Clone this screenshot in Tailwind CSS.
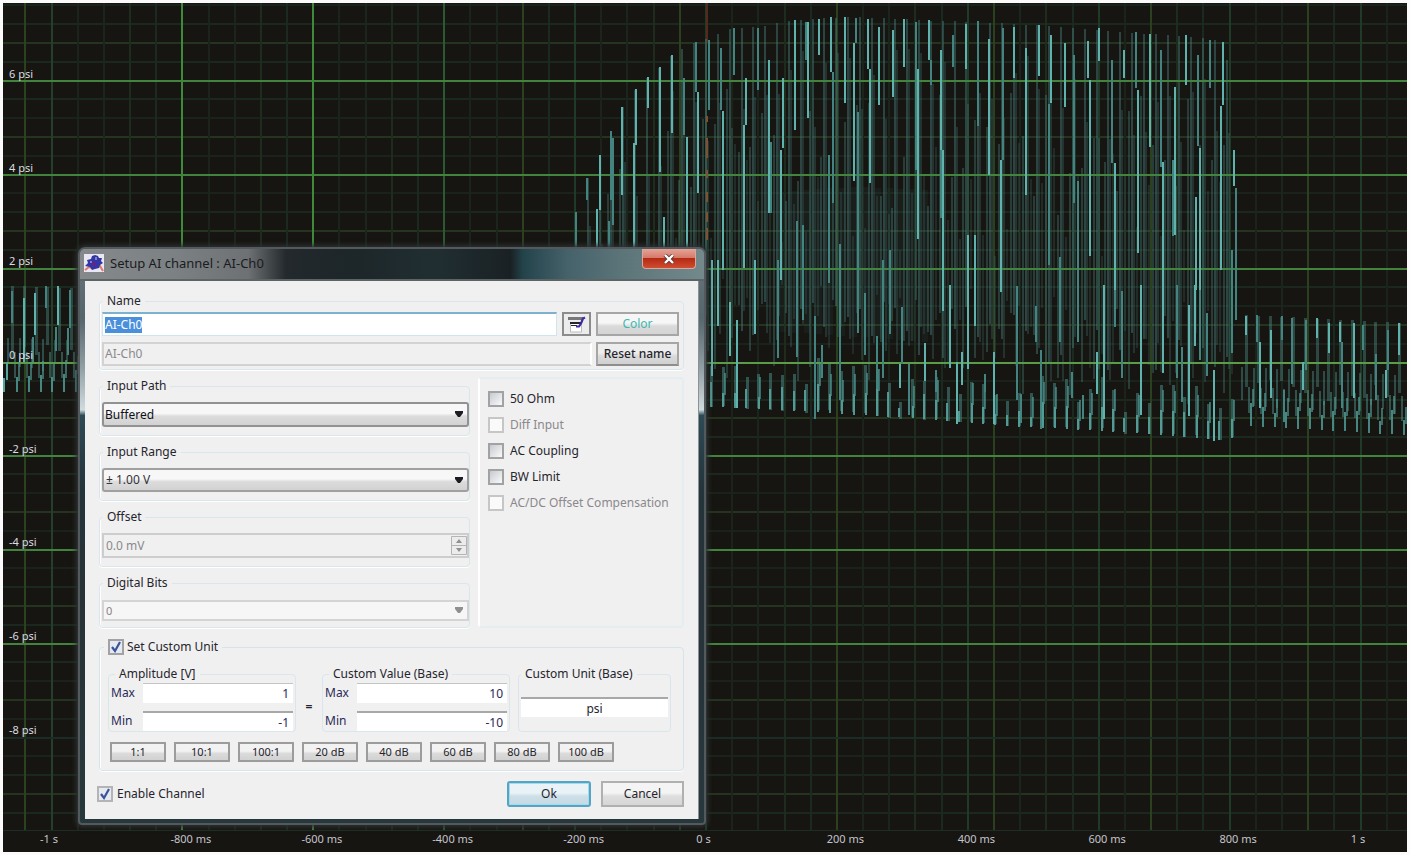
<!DOCTYPE html>
<html lang="en">
<head>
<meta charset="utf-8">
<title>Setup AI channel : AI-Ch0</title>
<script src="https://cdn.jsdelivr.net/npm/@tailwindcss/browser@4"></script>
</head>
<body class="h-screen overflow-hidden bg-[#fbfbfb] p-[3px] font-['Noto_Sans','Open_Sans',sans-serif] text-xs text-[#26242c]">
<main class="relative flex h-full flex-col bg-[#171511]">

  <!-- Oscilloscope plot -->
  <section class="relative min-h-0 flex-1 border-b border-[#1d2e25]" aria-label="Signal plot">
    <svg class="block h-full w-full" viewBox="3 3 1404 828" preserveAspectRatio="none" shape-rendering="crispEdges" fill="none" aria-hidden="true">
      <g id="grid"></g>
      <g id="dim"></g>
      <g id="major"></g>
      <g id="wave"></g>
    </svg>
    <div id="ylabels" class="text-[11px] leading-4 text-[#dcdce2]"></div>
  </section>
  <div id="xlabels" class="relative h-[21px] text-[11px] leading-4 text-[#c4c4cc]"></div>

  <!-- Dialog window -->
  <section role="dialog" aria-label="Setup AI channel : AI-Ch0" class="absolute left-[75px] top-[244px] flex w-[628px] flex-col rounded-t-[7px] rounded-b border-2 border-[#55595b] bg-[linear-gradient(180deg,#68777c_0%,#55666c_12%,#8b9a9f_20%,#cfdcdf_28%,#2d4a55_29%,#24343b_42%,#263238_60%,#27383d_100%)] px-[5px] pb-1 shadow-[0_0_5px_2px_#2c3336]">
    <header class="-mx-[5px] flex h-[32px] items-start justify-between rounded-t-[5px] border-b-2 border-[#5d6466] bg-[linear-gradient(90deg,#85898b_0%,#7c8183_15%,#6d7173_27%,#23292c_33%,#1d2629_43%,#202e32_57%,#1a2124_69%,#23434b_71%,#45616a_78%,#5c7579_87%,#73898c_100%)] pl-1 pr-2">
      <h1 class="flex items-center gap-1.5 pt-1 text-[13px] leading-5 text-[#1b1b22]">
        <svg class="h-[18px] w-5" viewBox="0 0 20 18" aria-hidden="true">
          <path fill="#e9e8f2" d="M0 0h20v18H0z"/>
          <path fill="none" stroke="#e4766a" stroke-width="2" d="M1 16l4-3 3 1M13 13l3-1 3 5"/>
          <path fill="#3436a4" d="M11 1l3 1 1 2h3l-1 3 2 2-3 2-1 3-4 1-3 1-2-3-5-1 3-3-1-3 4-1 1-3z"/>
          <path fill="#5a2a86" d="M8 8h4v4H8z"/>
          <path fill="#7c7fd6" d="M11 3h2v3h-2zM6 7h2v2H6z"/>
        </svg>
        Setup AI channel : AI-Ch0
      </h1>
      <button type="button" aria-label="Close" class="flex h-5 w-[54px] items-center justify-center rounded-b border border-t-0 border-[#d9a79c] bg-[linear-gradient(180deg,#e5a497_0%,#d67b6b_45%,#b52a13_50%,#cf4d30_100%)]">
        <svg class="h-2.5 w-3" viewBox="0 0 12 10" aria-hidden="true"><path d="M2 1l8 8M10 1L2 9" stroke="#5c3a38" stroke-width="4"/><path d="M2 1l8 8M10 1L2 9" stroke="#fff" stroke-width="2.4"/></svg>
      </button>
    </header>

    <form class="flex flex-col border-r border-[#8b9293] bg-[#f0f0f0] px-[14px] pb-3 pt-[11px]" onsubmit="return false">
      <fieldset class="rounded border border-[#d9e7ec] pb-[3px] pl-0.5 pr-1 pt-0.5 shadow-[inset_1px_0_0_#fff,0_1px_0_#fff]">
        <legend class="ml-px px-1 leading-[18px]">Name</legend>
        <div class="flex h-6 items-stretch gap-[5px]">
          <input id="name" aria-label="Name" value="AI-Ch0" class="min-w-0 flex-1 border border-[#cfe6f0] border-t-2 border-t-[#7db1d0] bg-white px-0.5 outline-none selection:bg-[#4a8fdc] selection:text-white">
          <button type="button" aria-label="Edit name" class="flex w-[29px] items-center justify-center border-2 border-[#8c8c8c] bg-[#ececec]">
            <svg class="h-[17px] w-[19px]" viewBox="0 0 19 17" aria-hidden="true"><path fill="#fff" stroke="#bbb" d="M3.500 6v10h11V6"/><path fill="#777" d="M1 1h15v3H1z"/><path fill="#26242c" d="M3 6h11v2H3zM4 9h6v1H4z"/><path d="M9 10.500h3l2-3 2-5 2-1" stroke="#3b2ca0" stroke-width="2.200" fill="none"/></svg>
          </button>
          <button type="button" class="w-[83px] border-2 border-[#a6a6a6] bg-[linear-gradient(180deg,#f6f6f6_45%,#dadada_60%,#d4d4d4)] text-[#3fb8b0]">Color</button>
        </div>
        <div class="mt-[6px] flex h-6 items-stretch gap-1">
          <input aria-label="Original name" value="AI-Ch0" disabled class="min-w-0 flex-1 border-2 border-[#d2d2d2] border-r-white bg-[#f0f0f0] px-px text-[#8b888c]">
          <button type="button" class="w-[83px] whitespace-nowrap border-2 border-[#a6a6a6] border-b-[#8e8e8e] bg-[linear-gradient(180deg,#ededed_45%,#dadada_60%,#d0d0d0)] font-medium">Reset name</button>
        </div>
      </fieldset>

      <div class="mt-[7px] flex items-start gap-2">
        <div class="flex min-w-0 flex-1 flex-col gap-[7px]">
          <fieldset class="rounded border border-[#d9e7ec] px-0.5 pb-2 pt-[7px] shadow-[inset_1px_0_0_#fff,0_1px_0_#fff]">
            <legend class="ml-px px-1 leading-[18px]">Input Path</legend>
            <div class="relative -mr-0.5">
              <select aria-label="Input Path" class="h-[25px] w-full appearance-none rounded-[3px] border-2 border-[#929292] bg-[linear-gradient(180deg,#f7f7f7_45%,#dcdcdc_58%,#d2d2d2)] px-px text-[#101018]"><option>Buffered</option></select>
              <svg class="pointer-events-none absolute right-1.5 top-[9px] h-[7px] w-2" viewBox="0 0 8 7" aria-hidden="true"><path fill="#1c1c22" d="M0 0h8v2L5 6H3L0 2z"/></svg>
            </div>
          </fieldset>
          <fieldset class="rounded border border-[#d9e7ec] px-0.5 pb-2 pt-[7px] shadow-[inset_1px_0_0_#fff,0_1px_0_#fff]">
            <legend class="ml-px px-1 leading-[18px]">Input Range</legend>
            <div class="relative -mr-0.5">
              <select aria-label="Input Range" class="h-[24px] w-full appearance-none rounded-[3px] border-2 border-[#a0a0a0] bg-[linear-gradient(180deg,#f7f7f7_45%,#dcdcdc_58%,#d2d2d2)] px-0.5 text-[#34323a]"><option>± 1.00 V</option></select>
              <svg class="pointer-events-none absolute right-1.5 top-[9px] h-[7px] w-2" viewBox="0 0 8 7" aria-hidden="true"><path fill="#1c1c22" d="M0 0h8v2L5 6H3L0 2z"/></svg>
            </div>
          </fieldset>
          <fieldset class="rounded border border-[#d9e7ec] px-0.5 pb-2 pt-[7px] shadow-[inset_1px_0_0_#fff,0_1px_0_#fff]">
            <legend class="ml-px px-1 leading-[18px]">Offset</legend>
            <div class="relative -mr-0.5">
              <input aria-label="Offset" value="0.0 mV" disabled class="h-[25px] w-full border-2 border-[#cdcdcd] bg-[#f0f0f0] px-0.5 text-[#8b888c]">
              <svg class="absolute right-0.5 top-[3px] h-[19px] w-4" viewBox="0 0 16 19" aria-hidden="true"><path fill="#ececec" stroke="#b4b4b4" d="M.5.5h15v18H.5zM.5 9.500h15"/><path fill="#8f8f8f" d="M8 3l3 4H5zM8 16l3-4H5z"/></svg>
            </div>
          </fieldset>
          <fieldset class="rounded border border-[#d9e7ec] px-0.5 pb-1.5 pt-2 shadow-[inset_1px_0_0_#fff,0_1px_0_#fff]">
            <legend class="ml-px px-1 leading-[18px]">Digital Bits</legend>
            <div class="relative -mr-0.5">
              <select aria-label="Digital Bits" disabled class="h-[21px] w-full appearance-none border-2 border-[#d4d4d4] bg-[#f6f6f6] px-0.5 text-[11px] leading-4 text-[#8b7f86] opacity-100"><option>0</option></select>
              <svg class="pointer-events-none absolute right-1.5 top-[7px] h-[7px] w-2" viewBox="0 0 8 7" aria-hidden="true"><path fill="#8f8f8f" d="M0 0h8v2L5 6H3L0 2z"/></svg>
            </div>
          </fieldset>
        </div>

        <div class="flex w-[206px] flex-col gap-2 self-stretch rounded border-2 border-[#e4edf0] border-l-white px-2 pt-[11px] leading-[18px]">
          <label class="flex items-center gap-1.5"><input type="checkbox" class="size-4 shrink-0 appearance-none border-2 border-[#a2a2a2] bg-[linear-gradient(135deg,#c6cad0,#fafafa)]">50 Ohm</label>
          <label class="flex items-center gap-1.5 text-[#8b888c]"><input type="checkbox" disabled class="size-4 shrink-0 appearance-none border-2 border-[#c6c6c6] bg-[#fafafa]">Diff Input</label>
          <label class="flex items-center gap-1.5"><input type="checkbox" class="size-4 shrink-0 appearance-none border-2 border-[#a2a2a2] bg-[linear-gradient(135deg,#c6cad0,#fafafa)]">AC Coupling</label>
          <label class="flex items-center gap-1.5"><input type="checkbox" class="size-4 shrink-0 appearance-none border-2 border-[#a2a2a2] bg-[linear-gradient(135deg,#c6cad0,#fafafa)]">BW Limit</label>
          <label class="flex items-center gap-1.5 whitespace-nowrap text-[#8b888c]"><input type="checkbox" disabled class="size-4 shrink-0 appearance-none border-2 border-[#c6c6c6] bg-[#fafafa]">AC/DC Offset Compensation</label>
        </div>
      </div>

      <fieldset class="mt-[10px] min-w-0 rounded border border-[#d3e4ea] px-2 pb-2 pt-[9px] shadow-[inset_1px_0_0_#fff,0_1px_0_#fff]">
        <legend class="-ml-1 px-1 leading-[18px]">
          <label class="flex items-center gap-[3px]"><span class="relative block size-4"><input type="checkbox" checked class="block size-4 appearance-none border-2 border-[#a2a2a2] bg-[#e4e9f2]"><svg class="pointer-events-none absolute inset-0 size-4" viewBox="0 0 16 16" aria-hidden="true"><path d="M4 8l3 4 5-9" fill="none" stroke="#3a5596" stroke-width="2.200"/></svg></span>Set Custom Unit</label>
        </legend>
        <div class="flex items-stretch">
          <fieldset class="w-[188px] rounded border border-[#d9e7ec] px-0.5">
            <legend class="ml-1 px-1 leading-[18px]">Amplitude [V]</legend>
            <div class="grid grid-cols-[32px_1fr] items-center gap-y-2 text-[#2a2a58]">
              <label for="amax">Max</label><input id="amax" value="1" class="h-5 min-w-0 border-t border-[#c4c4c4] bg-white px-1 text-right">
              <label for="amin">Min</label><input id="amin" value="-1" class="h-5 min-w-0 border-t-2 border-[#a8a8a8] bg-white px-1 text-right">
            </div>
          </fieldset>
          <span class="w-[26px] self-center pt-4 text-center font-bold leading-4">=</span>
          <fieldset class="w-[188px] rounded border border-[#d9e7ec] px-0.5">
            <legend class="ml-1 px-1 leading-[18px]">Custom Value (Base)</legend>
            <div class="grid grid-cols-[32px_1fr] items-center gap-y-2 text-[#2a2a58]">
              <label for="cmax">Max</label><input id="cmax" value="10" class="h-5 min-w-0 border-t border-[#c4c4c4] bg-white px-1 text-right">
              <label for="cmin">Min</label><input id="cmin" value="-10" class="h-5 min-w-0 border-t-2 border-[#a8a8a8] bg-white px-1 text-right">
            </div>
          </fieldset>
          <fieldset class="ml-2 w-[153px] rounded border border-[#d9e7ec] px-0.5 pt-3.5">
            <legend class="px-1 leading-[18px]">Custom Unit (Base)</legend>
            <input aria-label="Custom Unit (Base)" value="psi" class="h-5 w-full border-t-2 border-[#a8a8a8] bg-white text-center">
          </fieldset>
        </div>
        <div class="mt-2.5 flex gap-2 px-0.5 text-[11px] leading-4">
          <button type="button" class="w-14 border-2 border-[#9c9c9c] bg-[linear-gradient(180deg,#f2f2f2_45%,#dadada_60%,#d2d2d2)]">1:1</button>
          <button type="button" class="w-14 border-2 border-[#9c9c9c] bg-[linear-gradient(180deg,#f2f2f2_45%,#dadada_60%,#d2d2d2)]">10:1</button>
          <button type="button" class="w-14 border-2 border-[#9c9c9c] bg-[linear-gradient(180deg,#f2f2f2_45%,#dadada_60%,#d2d2d2)]">100:1</button>
          <button type="button" class="w-14 border-2 border-[#9c9c9c] bg-[linear-gradient(180deg,#f2f2f2_45%,#dadada_60%,#d2d2d2)]">20 dB</button>
          <button type="button" class="w-14 border-2 border-[#9c9c9c] bg-[linear-gradient(180deg,#f2f2f2_45%,#dadada_60%,#d2d2d2)]">40 dB</button>
          <button type="button" class="w-14 border-2 border-[#9c9c9c] bg-[linear-gradient(180deg,#f2f2f2_45%,#dadada_60%,#d2d2d2)]">60 dB</button>
          <button type="button" class="w-14 border-2 border-[#9c9c9c] bg-[linear-gradient(180deg,#f2f2f2_45%,#dadada_60%,#d2d2d2)]">80 dB</button>
          <button type="button" class="w-14 border-2 border-[#9c9c9c] bg-[linear-gradient(180deg,#f2f2f2_45%,#dadada_60%,#d2d2d2)]">100 dB</button>
        </div>
      </fieldset>

      <footer class="mt-[10px] flex items-center justify-between">
        <label class="-ml-0.5 flex items-center gap-1"><span class="relative block size-4"><input type="checkbox" checked class="block size-4 appearance-none border-2 border-[#b4b4b4] bg-[#e4e9f2]"><svg class="pointer-events-none absolute inset-0 size-4" viewBox="0 0 16 16" aria-hidden="true"><path d="M4 8l3 4 5-9" fill="none" stroke="#3a5596" stroke-width="2.200"/></svg></span>Enable Channel</label>
        <div class="flex gap-2.5">
          <button type="submit" class="h-[26px] w-[84px] rounded-[3px] border-2 border-[#58a3c2] bg-[linear-gradient(180deg,#e9f3f7_45%,#cddfe7_60%,#c4dae4)] shadow-[inset_0_0_0_1px_#9fdcf2]">Ok</button>
          <button type="button" class="h-[26px] w-[83px] border-2 border-[#b0b0b0] bg-[linear-gradient(180deg,#f4f4f4_45%,#dedede_60%,#d6d6d6)]">Cancel</button>
        </div>
      </footer>
    </form>
  </section>
</main>

<script>
const NS = 'http://www.w3.org/2000/svg';
const el = id => document.getElementById(id);
function path(group, d, stroke, width, opacity) {
  const p = document.createElementNS(NS, 'path');
  p.setAttribute('d', d); p.setAttribute('stroke', stroke);
  p.setAttribute('stroke-width', width); p.setAttribute('stroke-opacity', opacity || 1);
  el(group).appendChild(p);
}

// Grid: five divisions between labelled lines
for (let k = -19; k < 25; k++) {
  if (k % 5 === 0) continue;
  const y = Math.round(362.5 + 18.8 * k);
  path('grid', `M3 ${y}H1407`, ((k % 5) + 5) % 5 === 3 ? '#25341f' : k % 2 ? '#1a231b' : '#1b281e', 2);
}
for (let k = -1; k < 52; k++) {
  const x = Math.round(51.5 + 26.18 * k);
  let c = ['#21341f', '#1a251d', '#1b2a20', '#1b241a', '#1e2c1d'][(k * 3 + 5) % 5];
  if (k % 5 === 0) c = k === 0 ? '#24402c' : k < 15 ? '#3f8a38' : k === 15 ? '#2c5a30' : '#203a28';
  if (k > 15 && k % 6 === 0) c = '#2a401f';
  if (k === -1) c = '#2b421f';
  path('grid', `M${x} 3V831`, c, 2);
}
for (let k = -15; k <= 20; k += 5)
  path('major', `M3 ${Math.round(362.5 + 18.8 * k)}H1407`, k === 0 ? '#5a9c48' : k === 20 ? '#1b2b25' : '#42833d', 2);
// Trigger marker
path('grid', 'M707 3V43', '#55291f', 2);
path('major', 'M707 116V122M707 138V158M707 170V178M707 192V202M707 212V222M707 228V240', '#7a5236', 2);

const env = (pts, x) => {
  for (let i = 1; i < pts.length; i++) if (x <= pts[i][0]) {
    const [a, b] = pts[i - 1], [c, d] = pts[i];
    return b + (d - b) * (x - a) / (c - a);
  }
  return pts[pts.length - 1][1];
};
const top_ = [[576,212],[588,178],[600,155],[612,131],[623,107],[636,89],[648,77],[660,67],[672,55],[684,48],[696,42],[708,38],[733,28],[758,27],[795,20],[845,17],[880,18],[940,21],[1000,23],[1050,26],[1100,30],[1150,34],[1200,38],[1225,42],[1233,131],[1240,190]];
const bot_ = [[576,400],[710,409],[800,413],[880,419],[950,425],[1020,430],[1100,434],[1160,438],[1215,443],[1240,438]];
let s = 11;
const rnd = () => (s = (s * 16807) % 2147483647) / 2147483647;
const f = Math.round;

// Faint fill lines of the burst
for (let i = 0; i < 56; i++) {
  const x = 576 + 11.83 * i, t = env(top_, x), b = env(bot_, x);
  path('dim', `M${f(x)} ${f(t)}V${f(b - 60 - 60 * rnd())}`, '#47817f', 2, .45);
  path('dim', `M${f(x + 2)} ${f(t + 30 + 80 * rnd())}V${f(b - 50 - 50 * rnd())}`, '#47817f', 2, .28);
  path('dim', `M${f(x - 3)} ${f(t + 60 + 130 * rnd())}V${f(b - 30 - 100 * rnd())}`, '#47817f', 2, .36);
  path('dim', `M${f(x + 5)} ${f(t + 110 + 130 * rnd())}V${f(b - 60 - 80 * rnd())}`, '#47817f', 2, .22);
  if (x > 770 && x < 930) path('dim', `M${f(x + 6)} ${f(t + 170)}V${f(b - 80)}`, '#35525a', 6, .14);
  const p = b - 6 - 18 * rnd(), g = rnd();
  path('dim', `M${f(x + 5)} ${f(p - 12 - 26 * g)}V${f(b - 5 * g)}`, '#3f7773', 3, .65);
  path('wave', `M${f(x + 4 + 2 * g)} ${f(p - 6)}V${f(b - 2)}`, '#56a39c', 2, .9);
  if (g > .45) path('wave', `M${f(x + 7)} ${f(p - 26)}V${f(p - 4)}`, '#4a918b', 2, .7);
}
// Quiet signal before and after the burst
function quiet(x0, x1, step, t0, t1, b0, b1) {
  for (let x = x0; x < x1; x += step) {
    const q = (x - x0) / (x1 - x0), t = t0 + (t1 - t0) * q, b = b0 + (b1 - b0) * q;
    path('dim', `M${f(x)} ${f(t)}V${f(b - 30 - 20 * rnd())}`, '#4d8f8a', 3, .42);
    path('dim', `M${f(x - 4)} ${f(t + 52)}V${f(b - 20 - 10 * rnd())}`, '#4d8f8a', 2, .45);
    path('dim', `M${f(x + 3)} ${f(b - 40)}V${f(b - 14)}`, '#4d8f8a', 2, .5);
    const p = b - 8 - 14 * rnd();
    path('wave', `M${f(x + 5)} ${f(p - 4)}V${f(b)}`, '#509a94', 2, .85);
    path('wave', `M${f(x + 7)} ${f(p - 18)}V${f(p)}`, '#509a94', 2, .65);
  }
}
quiet(12, 72, 11.8, 286, 288, 392, 392);
quiet(1246, 1401, 11.75, 315, 323, 427, 436);
path('wave', 'M4 378V392M7 362V380', '#56a49e', 2);

// Bright strokes, each one x, start y, end y
const bright = '600,155,210 597,209,247 622,107,195 636,89,145 634,143,247 648,77,108 660,67,172 664,217,247 672,55,133 687,137,247 698,92,193 723,111,270 746,78,125 744,125,268 769,60,213 783,78,148 781,150,280 795,20,130 808,22,118 819,19,55 831,17,72 845,17,103 854,43,181 868,19,69 870,69,183 879,27,105 893,30,97 904,19,67 918,69,239 929,20,60 941,50,150 943,150,311 966,24,69 968,235,369 975,235,326 989,39,175 1001,160,292 1014,27,78 1026,48,195 1039,25,76 1051,35,103 1065,43,107 1088,41,78 1090,80,256 1099,28,61 1115,163,290 1124,50,78 1138,90,253 1150,34,147 1163,162,290 1175,87,235 1186,35,85 1200,148,290 1196,197,290 1223,42,105 1221,106,270 1234,150,186 712,260,376 718,260,326 730,302,356 737,320,408 755,260,334 900,364,388 925,343,381 950,285,368 957,362,425 962,352,385 994,352,425 1097,352,394 1104,285,420 1141,285,415 1163,285,373 1189,305,416 1195,285,346 1214,370,442 1246,316,335 1260,342,408 1271,330,398 1303,362,390 1317,318,338 1329,323,353 1340,322,342 1354,323,398 1386,370,398 1399,323,355 24,298,362 35,293,335 58,286,325';
const medium = '576,212,248 587,178,200 611,131,200 613,138,225 609,221,247 684,78,135 696,42,92 709,40,110 721,48,110 734,28,75 758,28,90 771,142,213 806,22,60 829,155,283 833,72,203 856,18,43 916,22,170 931,60,85 941,150,218 953,35,67 978,21,126 1003,28,160 1049,104,265 1074,55,203 1078,181,342 1112,60,163 1136,32,88 1161,50,167 1173,160,236 1198,55,146 1210,40,88 1236,188,320 797,221,357 803,225,320 778,260,358 815,316,420 822,345,378 858,112,333 865,293,355 840,244,400 877,336,389 883,260,378 890,250,334 902,307,364 909,364,415 936,370,392 985,374,392 1017,286,400 1021,394,424 1036,306,342 1041,350,430 1060,257,342 1072,372,398 1083,395,420 1115,285,327 1122,291,378 1177,285,378 1182,347,402 1200,285,360 1207,313,376 1232,250,353 1257,315,342 1282,316,340 1284,390,423 1292,318,384 1306,320,370 1342,342,408 1363,325,350 1376,354,400 1388,330,370 12,291,323 33,337,362 46,286,308 56,327,351 70,290,328 68,328,355';
const strokes = t => t.split(' ').map(q => { const [x, a, b] = q.split(','); return `M${x} ${a}V${b}`; }).join('');
path('wave', strokes(medium), '#438480', 2);
path('wave', strokes(bright), '#60b3ac', 2);

// Axis labels
function label(host, text, side, pct, cls) {
  const n = document.createElement('span');
  n.className = cls; n.textContent = text; n.style[side] = pct + '%';
  el(host).appendChild(n);
}
['6 psi','4 psi','2 psi','0 psi','-2 psi','-4 psi','-6 psi','-8 psi'].forEach((t, i) =>
  label('ylabels', t, 'top', (63 + 93.8 * i) / 8.28, 'absolute left-[6px]'));
['-1 s','-800 ms','-600 ms','-400 ms','-200 ms','0 s','200 ms','400 ms','600 ms','800 ms','1 s'].forEach((t, i) => {
  const short = t.length < 5;
  label('xlabels', t, 'left', ((short ? 46 : 57) + 130.9 * i) / 14.04, 'absolute -translate-x-1/2 whitespace-nowrap');
});
const nameBox = el('name');
nameBox.focus(); nameBox.select();
</script>
</body>
</html>
